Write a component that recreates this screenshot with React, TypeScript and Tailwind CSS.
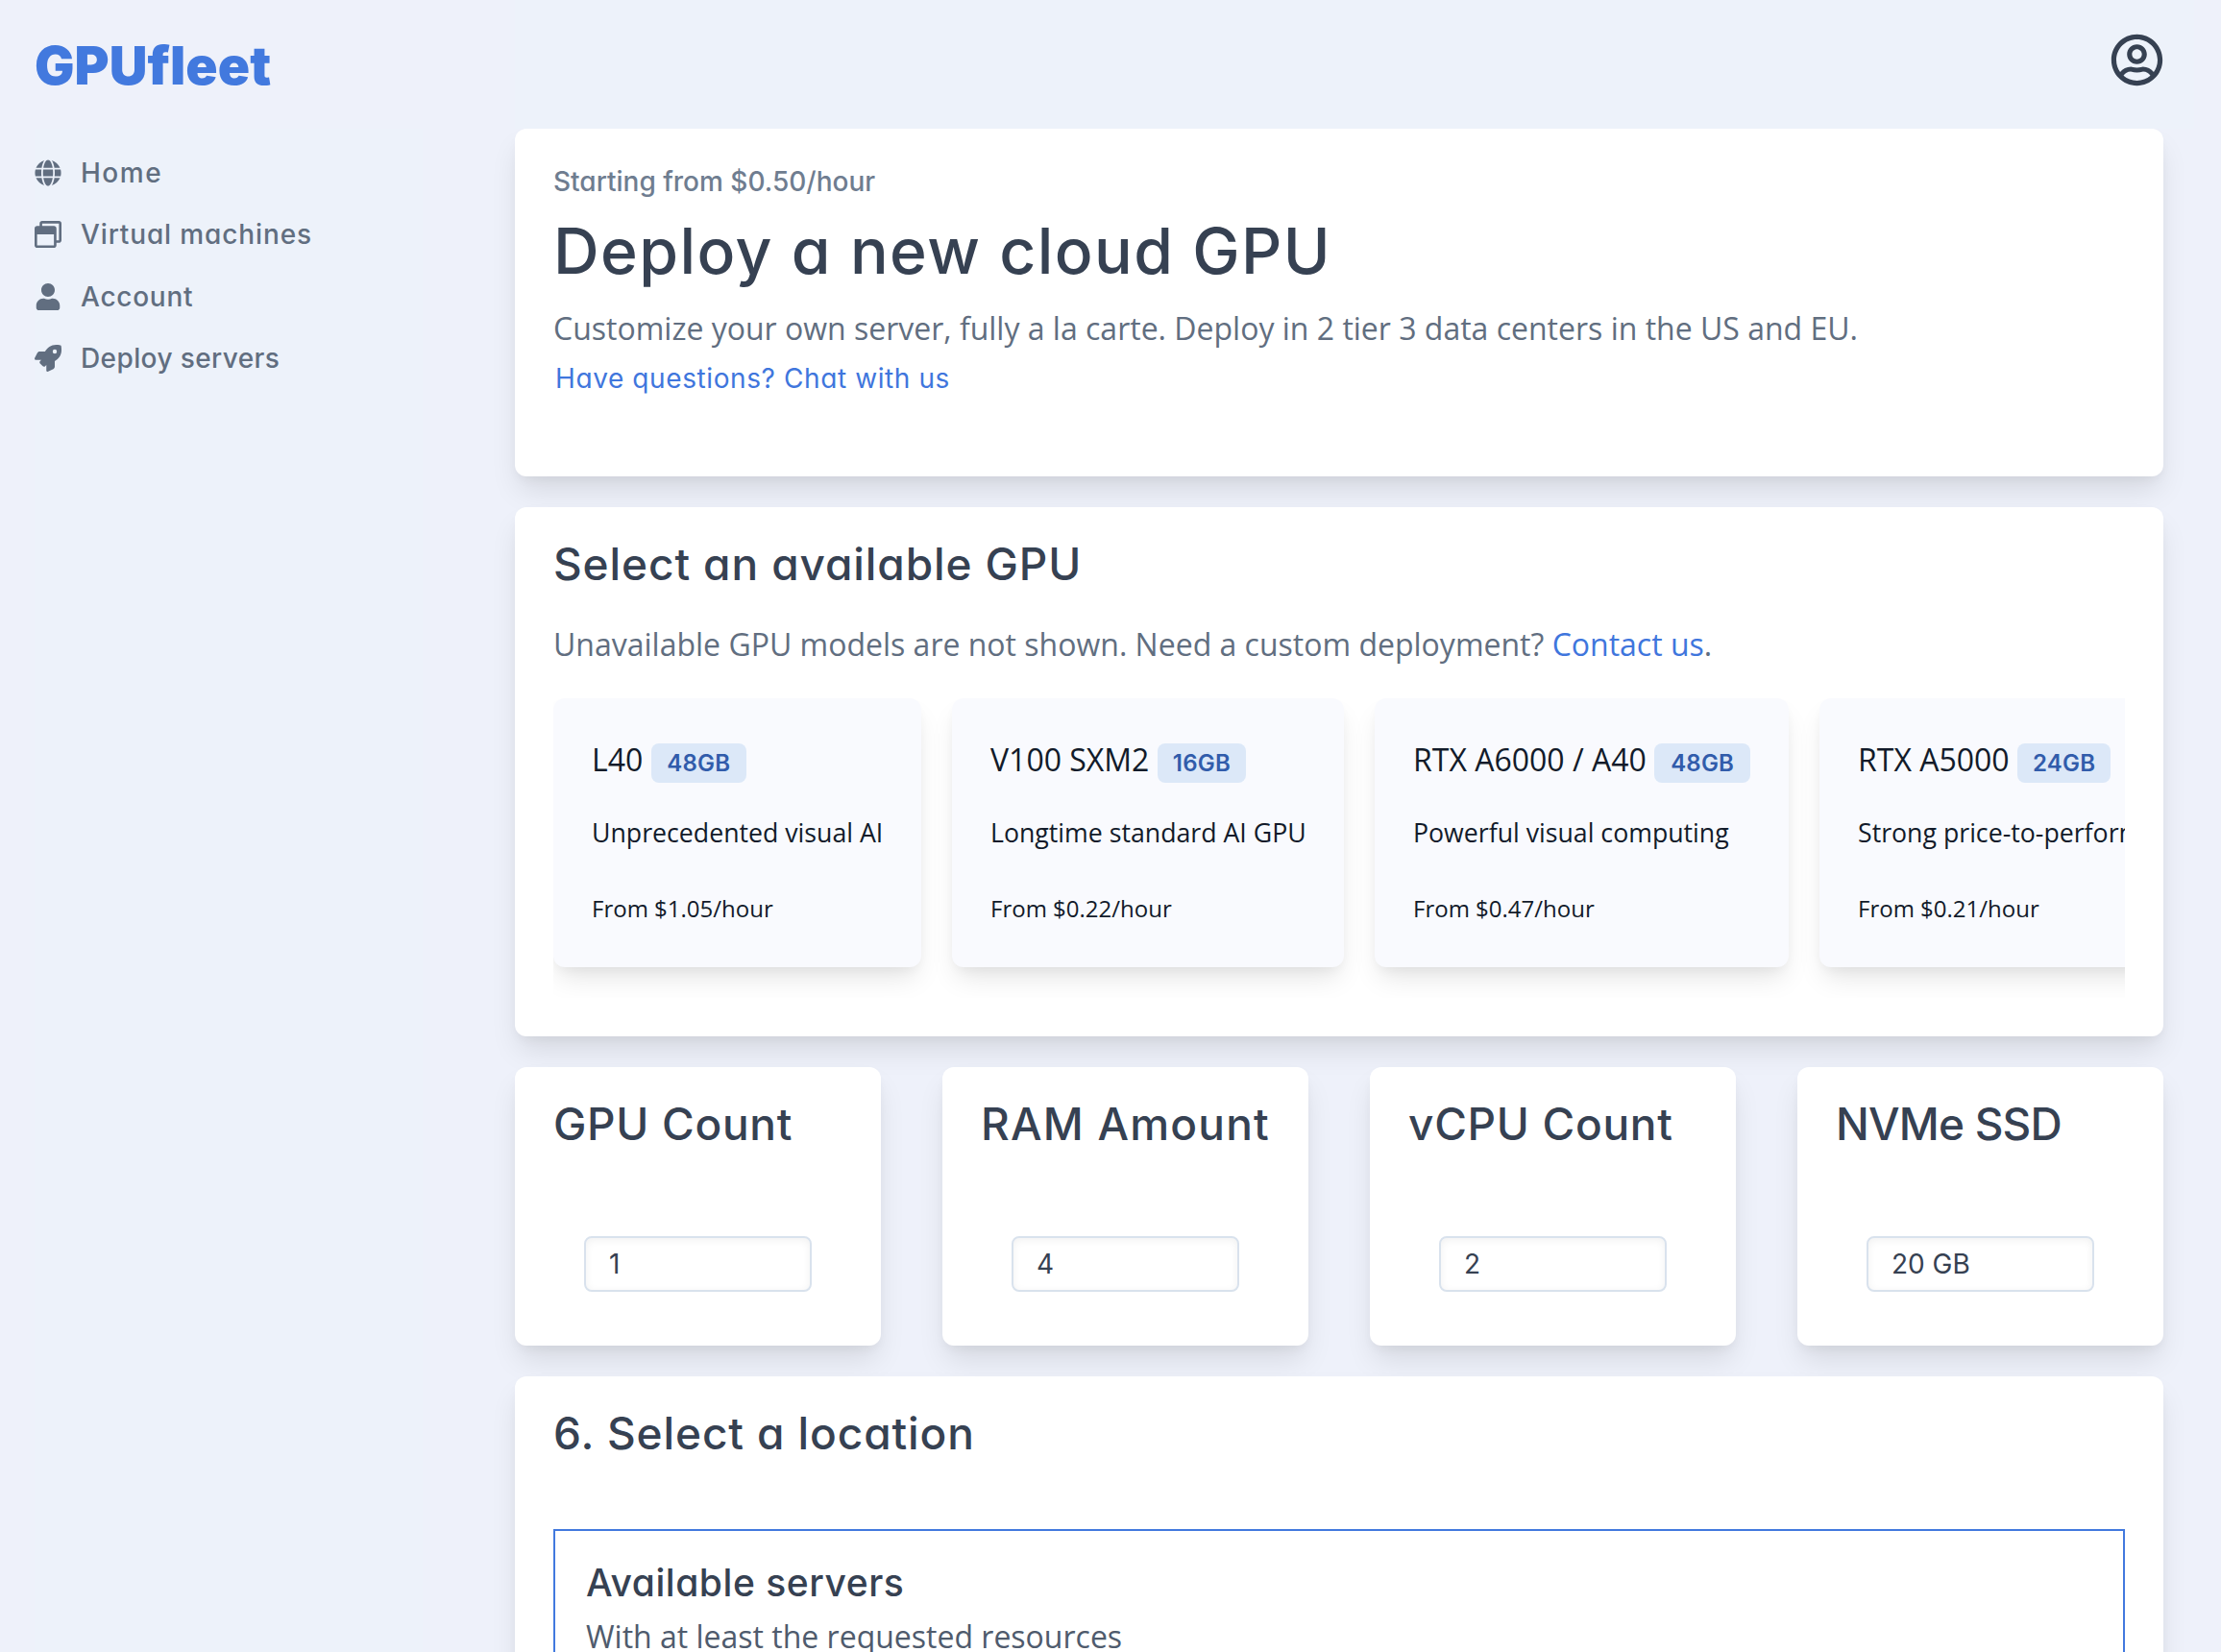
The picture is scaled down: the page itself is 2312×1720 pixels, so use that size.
import React from "react";
import { FaGlobe, FaRegUserCircle, FaRegWindowRestore, FaRocket, FaUser } from "react-icons/fa";

const geo = "font-['Inter',sans-serif] [font-feature-settings:'cv11'] whitespace-nowrap";
const body = "font-['Open_Sans',sans-serif] whitespace-nowrap";
const card =
  "bg-white rounded-[12px] shadow-[0_18px_30px_-4px_rgba(0,0,0,0.1),0_6px_12px_-3px_rgba(0,0,0,0.05)]";
const heading = `${geo} text-[46px] leading-[38px] font-medium text-[#364152]`;

const nav = [
  { label: "Home", icon: FaGlobe, track: "tracking-[1.5px]" },
  { label: "Virtual machines", icon: FaRegWindowRestore, track: "tracking-[0.87px]" },
  { label: "Account", icon: FaUser, track: "tracking-[0.75px]" },
  { label: "Deploy servers", icon: FaRocket, track: "tracking-[0.4px]" },
];

const gpus = [
  { name: "L40", mem: "48GB", text: "Unprecedented visual AI", price: "From $1.05/hour", width: "w-[383px]", badge: "w-[99px]" },
  { name: "V100 SXM2", mem: "16GB", text: "Longtime standard AI GPU", price: "From $0.22/hour", width: "w-[408px]", badge: "w-[92px]" },
  { name: "RTX A6000 / A40", mem: "48GB", text: "Powerful visual computing", price: "From $0.47/hour", width: "w-[431px]", badge: "w-[100px]" },
  { name: "RTX A5000", mem: "24GB", text: "Strong price-to-performance", price: "From $0.21/hour", width: "w-[440px]", badge: "w-[97px]" },
];

const counts = [
  { title: "GPU Count", value: "1", track: "tracking-[0.7px]" },
  { title: "RAM Amount", value: "4", track: "tracking-[1.2px]" },
  { title: "vCPU Count", value: "2", track: "tracking-[0.7px]" },
  { title: "NVMe SSD", value: "20 GB", track: "tracking-[-0.8px]" },
];

function Sidebar() {
  return (
    <aside className="w-[536px] shrink-0 pl-9">
      <div className={`${geo} h-[134px] pt-9 text-[55px] leading-[64px] font-black tracking-[0.1px] text-[#4279de]`}>
        GPUfleet
      </div>
      <nav className="h-[1586px] w-[404px] bg-[#edf2fa] pt-[14px]">
        {nav.map(({ label, icon: Icon, track }) => (
          <a key={label} className="flex h-[64.33px] items-center text-[#616e80]">
            <span className="flex w-12 shrink-0">
              <Icon size={28} />
            </span>
            <span className={`${geo} ${track} text-[28px] leading-[64px] font-medium`}>{label}</span>
          </a>
        ))}
      </nav>
    </aside>
  );
}

function GpuCard({ gpu }: { gpu: (typeof gpus)[number] }) {
  return (
    <div
      className={`${gpu.width} ${body} h-[280px] shrink-0 rounded-[12px] bg-[#f9fafe] p-10 text-[#121b2a] shadow-[0_16px_28px_-5px_rgba(0,0,0,0.1),0_6px_12px_-3px_rgba(0,0,0,0.05)]`}
    >
      <div className="flex h-12 items-end gap-[8.5px]">
        <span className="text-[32px] leading-[48px]">{gpu.name}</span>
        <span
          className={`${gpu.badge} ${geo} flex h-[41px] items-center justify-center rounded-[8px] bg-[#dce8f8] text-[24px] font-semibold tracking-[0.2px] text-[#315cab]`}
        >
          {gpu.mem}
        </span>
      </div>
      <p className="mt-[31px] text-[26.7px] leading-[42px]">{gpu.text}</p>
      <p className="mt-[40px] text-[24px] leading-[36px]">{gpu.price}</p>
    </div>
  );
}

export default function App() {
  return (
    <div className="flex h-[1720px] w-[2312px] overflow-hidden bg-[#eef1fa]">
      <Sidebar />
      <div className="w-[1748px] shrink-0">
        <header className="relative z-10 flex h-[134px] items-start justify-end bg-[#edf2fa] pt-[35px] pr-8">
          <FaRegUserCircle size={55} className="text-[#364152]" />
        </header>

        <main className="flex w-[1716px] flex-col gap-8">
          <section className={`${card} h-[362px] px-10 pt-10`}>
            <p className={`${geo} text-[28px] leading-[30px] font-medium text-[#6f7d90]`}>
              Starting from $0.50/hour
            </p>
            <h1 className={`${geo} mt-[17px] text-[66px] leading-[80px] font-medium tracking-[1.4px] text-[#364152]`}>
              Deploy a new cloud GPU
            </h1>
            <p className={`${body} mt-[17px] text-[32px] leading-[48px] text-[#616e80]`}>
              Customize your own server, fully a la carte. Deploy in 2 tier 3 data centers in the US and EU.
            </p>
            <a className={`${geo} mt-2 ml-[2px] block text-[28px] leading-[40px] tracking-[0.6px] text-[#3f76dd]`}>
              Have questions? Chat with us
            </a>
          </section>

          <section className={`${card} h-[551px] px-10 pt-10`}>
            <h2 className={`${heading} tracking-[0.9px]`}>Select an available GPU</h2>
            <p className={`${body} mt-[41px] text-[32px] leading-[48px] text-[#616e80]`}>
              Unavailable GPU models are not shown. Need a custom deployment?{" "}
              <a className="text-[#3f76dd]">Contact us</a>.
            </p>
            <div className="mt-8 flex h-[312px] gap-8 overflow-hidden">
              {gpus.map((gpu) => (
                <GpuCard key={gpu.name} gpu={gpu} />
              ))}
            </div>
          </section>

          <section className="grid grid-cols-4 gap-16">
            {counts.map((c) => (
              <div key={c.title} className={`${card} h-[290px] px-10 pt-10`}>
                <h2 className={`${heading} ${c.track}`}>{c.title}</h2>
                <div
                  className={`${geo} mt-[98px] ml-8 flex h-[58px] w-[237px] items-center rounded-[8px] border-2 border-[#d9e2ed] bg-white pl-6 text-[28px] text-[#364152] shadow-[inset_0_2px_8px_rgba(0,0,0,0.06)]`}
                >
                  {c.value}
                </div>
              </div>
            ))}
          </section>

          <section className={`${card} h-[600px] px-10 pt-10`}>
            <h2 className={`${heading} tracking-[0.9px]`}>6. Select a location</h2>
            <div className="mt-[81px] h-[400px] border-2 border-[#4279de] px-8 pt-[30px]">
              <h3 className={`${geo} text-[39px] leading-[48px] font-medium tracking-[0.55px] text-[#364152]`}>
                Available servers
              </h3>
              <p className={`${body} mt-2 text-[32px] leading-[48px] text-[#4f5b6d]`}>
                With at least the requested resources
              </p>
            </div>
          </section>
        </main>
      </div>
    </div>
  );
}
